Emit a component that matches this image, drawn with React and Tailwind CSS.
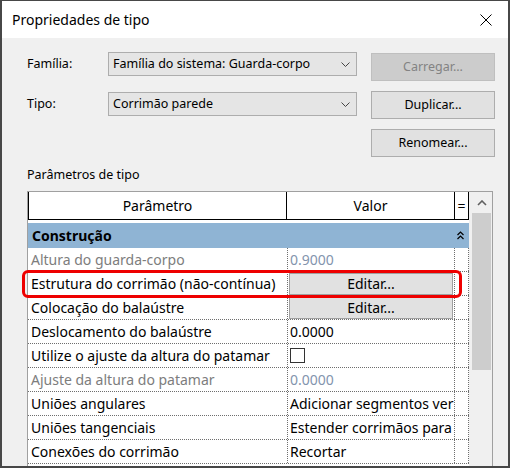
import { useState } from 'react';

const rows = [
  { name: 'Altura do guarda-corpo', value: '0.9000', disabled: true },
  { name: 'Estrutura do corrimão (não-contínua)', button: 'Editar...' },
  { name: 'Colocação do balaústre', button: 'Editar...' },
  { name: 'Deslocamento do balaústre', value: '0.0000' },
  { name: 'Utilize o ajuste da altura do patamar', checkbox: true },
  { name: 'Ajuste da altura do patamar', value: '0.0000', disabled: true },
  { name: 'Uniões angulares', value: 'Adicionar segmentos ver' },
  { name: 'Uniões tangenciais', value: 'Estender corrimãos para' },
  { name: 'Conexões do corrimão', value: 'Recortar' },
];

function Chevron() {
  return (
    <svg width="9" height="5" viewBox="0 0 9 5" className="shrink-0">
      <path d="M0.5 0.5 L4.5 4.5 L8.5 0.5" fill="none" stroke="#444" strokeWidth="1" />
    </svg>
  );
}

function Select({ value }) {
  return (
    <div className="flex h-[24px] w-[249px] items-center justify-between border border-[#adadad] bg-[#e5e5e5] pl-[4px] pr-[6px] text-black">
      <span className="truncate">{value}</span>
      <Chevron />
    </div>
  );
}

function Button({ children, disabled }) {
  return (
    <div
      className={`flex h-[28px] w-[124px] items-center justify-center border ${
        disabled ? 'border-[#bfbfbf] bg-[#cccccc] text-[#838383]' : 'border-[#adadad] bg-[#e1e1e1] text-black'
      }`}
    >
      {children}
    </div>
  );
}

function Row({ row }) {
  const [checked, setChecked] = useState(false);
  return (
    <div className="flex h-[24px] shrink-0 border-b border-dotted border-[#6e6e6e]">
      <div className={`flex w-[259px] items-center overflow-hidden whitespace-nowrap pl-[3px] ${row.disabled ? 'text-[#7d7d7d]' : 'text-black'}`}>
        {row.name}
      </div>
      <div className="flex w-[167px] items-center overflow-hidden whitespace-nowrap border-l border-dotted border-[#6e6e6e]">
        {row.button && (
          <div className="mx-[1px] flex h-[22px] w-full items-center justify-center border border-[#a0a0a0] bg-[#e1e1e1] text-black">
            {row.button}
          </div>
        )}
        {row.checkbox && (
          <button
            onClick={() => setChecked(!checked)}
            className="ml-[2px] h-[15px] w-[15px] border border-[#333] bg-white text-[11px] leading-none"
          >
            {checked ? '✓' : ''}
          </button>
        )}
        {row.value && (
          <span className={`pl-[2px] ${row.disabled ? 'text-[#8394ad]' : 'text-black'}`}>{row.value}</span>
        )}
      </div>
      <div className="w-[15px] border-x border-dotted border-[#6e6e6e]" />
    </div>
  );
}

export default function App() {
  return (
    <div className="relative flex h-[468px] w-[510px] flex-col overflow-hidden bg-[#474747] px-[2px] pb-[2px] pt-[1px] font-['Noto_Sans','Open_Sans',sans-serif] text-[12.5px]">
      {/* Title bar */}
      <div className="flex h-[37px] shrink-0 items-center justify-between bg-white pl-[10px] pr-[16px]">
        <span className="text-[14px] text-black">Propriedades de tipo</span>
        <svg width="12" height="12" viewBox="0 0 12 12">
          <path d="M0.5 0.5 L11.5 11.5 M11.5 0.5 L0.5 11.5" stroke="#000" strokeWidth="1" />
        </svg>
      </div>

      <div className="flex min-h-0 flex-1 flex-col bg-[#f0f0f0]">
        {/* Family / type selectors and actions */}
        <div className="flex pl-[25px] pt-[14px]">
          <div className="flex flex-col gap-[16px]">
            <div className="flex items-center">
              <span className="w-[81px] text-black">Família:</span>
              <Select value="Família do sistema: Guarda-corpo" />
            </div>
            <div className="flex items-center">
              <span className="w-[81px] text-black">Tipo:</span>
              <Select value="Corrimão parede" />
            </div>
          </div>
          <div className="ml-[14px] mt-[1px] flex flex-col gap-[10px]">
            <Button disabled>Carregar...</Button>
            <Button>Duplicar...</Button>
            <Button>Renomear...</Button>
          </div>
        </div>

        <div className="ml-[25px] mt-[9px] h-[17px] leading-[17px] text-black">Parâmetros de tipo</div>

        {/* Parameter grid */}
        <div className="ml-[25px] mt-[8px] flex min-h-0 w-[466px] flex-1 overflow-hidden border-x border-t border-[#a0a0a0] bg-white text-[14px]">
          <div className="flex w-[441px] flex-col">
            <div className="flex h-[28px] shrink-0 border-b border-black">
              <div className="flex w-[259px] items-center justify-center border-x border-black text-black">Parâmetro</div>
              <div className="flex w-[168px] items-center justify-center border-r border-black text-black">Valor</div>
              <div className="flex w-[14px] items-center justify-center border-r border-black text-black">=</div>
            </div>
            <div className="mt-[3px] flex h-[25px] shrink-0 items-center justify-between bg-[#8fb4d4] pl-[4px] pr-[5px]">
              <span className="font-bold text-black">Construção</span>
              <svg width="7" height="9" viewBox="0 0 7 9">
                <path d="M0.5 4 L3.5 1 L6.5 4 M0.5 8 L3.5 5 L6.5 8" fill="none" stroke="#000" strokeWidth="1.2" />
              </svg>
            </div>
            {rows.map((row) => (
              <Row key={row.name} row={row} />
            ))}
          </div>

          {/* Vertical scrollbar */}
          <div className="flex w-[23px] flex-col bg-[#f0f0f0]">
            <div className="flex h-[21px] shrink-0 items-center justify-center pl-[2px]">
              <svg width="10" height="6" viewBox="0 0 10 6">
                <path d="M1 5 L5 1 L9 5" fill="none" stroke="#606060" strokeWidth="1.6" />
              </svg>
            </div>
            <div className="ml-[3px] h-[157px] w-[19px] bg-[#cdcdcd]" />
          </div>
        </div>
      </div>

      {/* Highlight around the rail structure row */}
      <div className="pointer-events-none absolute left-[22px] top-[270px] h-[28px] w-[440px] rounded-[6px] border-[3px] border-[#ee0000]" />
    </div>
  );
}
